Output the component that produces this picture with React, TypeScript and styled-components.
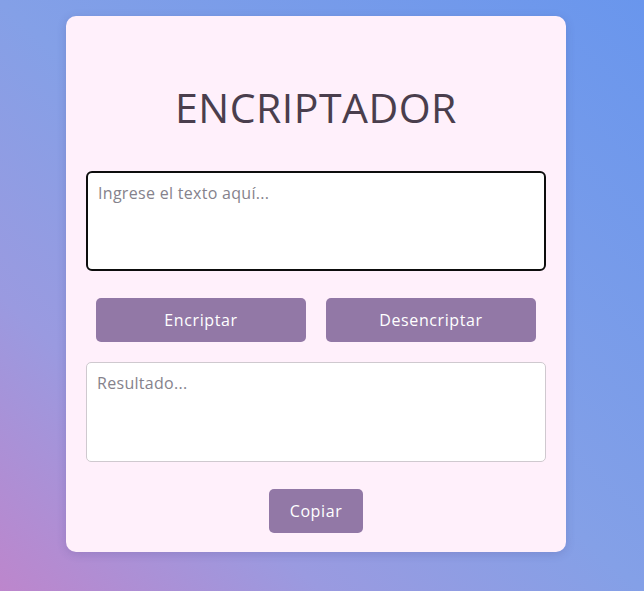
import React from "react";
import styled, { createGlobalStyle } from "styled-components";

const Global = createGlobalStyle`
  * { box-sizing: border-box; }
  html, body { margin: 0; padding: 0; height: 100%; }
  body {
    font-family: "Open Sans", "Liberation Sans", sans-serif;
    background: linear-gradient(to top right, #bd86cc 0%, #9a9ae0 25%, #84a0e7 50%, #6996ed 100%);
    min-height: 591px;
  }
`;

const Page = styled.main`
  display: flex;
  justify-content: center;
  align-items: flex-start;
  padding: 16px 12px 0 0;
  min-height: 591px;
`;

const Card = styled.section`
  width: 500px;
  background: #fff0fb;
  border-radius: 10px;
  box-shadow: 0 2px 10px rgba(60, 60, 120, 0.2);
  padding: 67px 20px 19px;
  display: flex;
  flex-direction: column;
  align-items: stretch;
`;

const Title = styled.h1`
  margin: 0;
  text-align: center;
  font-family: "Open Sans", "Liberation Sans", sans-serif;
  font-weight: 400;
  font-size: 41px;
  line-height: 48px;
  letter-spacing: 0.5px;
  color: #4a3e4d;
`;

const TextBox = styled.textarea<{ $focused?: boolean }>`
  display: block;
  width: 100%;
  height: 100px;
  resize: none;
  margin-top: ${(p) => (p.$focused ? "40px" : "20px")};
  padding: 9px 10px;
  border-radius: ${(p) => (p.$focused ? "6px" : "5px")};
  border: ${(p) => (p.$focused ? "2px solid #0d0d0d" : "1px solid #cfc9cf")};
  background: #ffffff;
  font-family: "Open Sans", "Liberation Sans", sans-serif;
  font-size: 16px;
  letter-spacing: 0.3px;
  line-height: 22px;
  color: #333;
  outline: none;
  &::placeholder { color: #85828c; }
`;

const ButtonRow = styled.div`
  display: flex;
  gap: 20px;
  padding: 0 10px;
  margin-top: 27px;
`;

const Button = styled.button<{ $grow?: boolean }>`
  flex: ${(p) => (p.$grow ? "1 1 0" : "none")};
  height: 44px;
  padding: 0 21px;
  border: none;
  border-radius: 5px;
  background: #9278a6;
  color: #ffffff;
  font-family: "Open Sans", "Liberation Sans", sans-serif;
  font-size: 16px;
  letter-spacing: 0.6px;
  cursor: pointer;
`;

const CopyRow = styled.div`
  display: flex;
  justify-content: center;
  margin-top: 27px;
`;

export default function App() {
  return (
    <>
      <Global />
      <Page>
        <Card>
          <Title>ENCRIPTADOR</Title>
          <TextBox $focused placeholder="Ingrese el texto aquí..." />
          <ButtonRow>
            <Button $grow>Encriptar</Button>
            <Button $grow>Desencriptar</Button>
          </ButtonRow>
          <TextBox placeholder="Resultado..." readOnly />
          <CopyRow>
            <Button>Copiar</Button>
          </CopyRow>
        </Card>
      </Page>
    </>
  );
}
